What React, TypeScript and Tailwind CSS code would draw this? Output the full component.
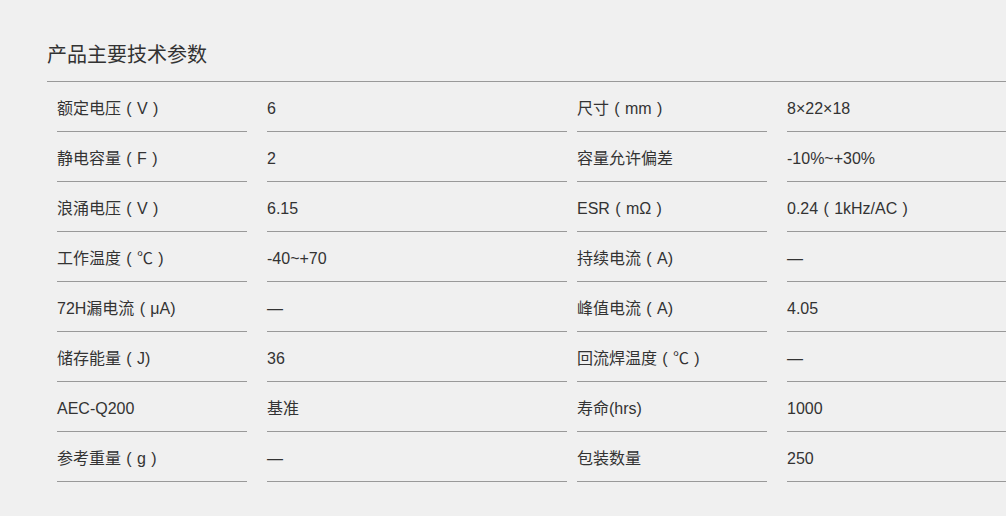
import React from 'react';

interface SpecItem {
  label: string;
  value: string;
}

const specs: SpecItem[] = [
  { label: '额定电压（V）', value: '6' },
  { label: '尺寸（mm）', value: '8×22×18' },
  { label: '静电容量（F）', value: '2' },
  { label: '容量允许偏差', value: '-10%~+30%' },
  { label: '浪涌电压（V）', value: '6.15' },
  { label: 'ESR（mΩ）', value: '0.24（1kHz/AC）' },
  { label: '工作温度（℃）', value: '-40~+70' },
  { label: '持续电流（A)', value: '—' },
  { label: '72H漏电流（μA)', value: '—' },
  { label: '峰值电流（A)', value: '4.05' },
  { label: '储存能量（J)', value: '36' },
  { label: '回流焊温度（℃）', value: '—' },
  { label: 'AEC-Q200', value: '基准' },
  { label: '寿命(hrs)', value: '1000' },
  { label: '参考重量（g）', value: '—' },
  { label: '包装数量', value: '250' },
];

// full-width brackets drawn centred in their em box, the way the original font does it
function SpecText({ text }: { text: string }) {
  const parts = text.split(/([（）])/);
  return (
    <>
      {parts.map((part, i) =>
        part === '（' || part === '）' ? (
          <span key={i} className="inline-block w-[16px] text-center">
            {part === '（' ? '(' : ')'}
          </span>
        ) : (
          <React.Fragment key={i}>{part}</React.Fragment>
        )
      )}
    </>
  );
}

export default function App() {
  return (
    <div
      className="min-h-screen w-full overflow-hidden bg-[#f0f0f0] text-[#333]"
      style={{ fontFamily: '"Liberation Sans", "Noto Sans CJK SC", sans-serif' }}
    >
      <div className="ml-[47px] w-[1100px]">
        <div className="border-b border-[#999] pb-[12px] pt-[41px] text-[20px] leading-[28px]">
          产品主要技术参数
        </div>

        <ul className="grid w-[1040px] grid-cols-2">
          {specs.map((item) => (
            <li key={item.label} className="flex">
              <div className="ml-[10px] h-[50px] w-[190px] border-b border-[#999] pt-[16px] text-[16px] leading-[22px]">
                <SpecText text={item.label} />
              </div>
              <div className="ml-[20px] h-[50px] w-[300px] border-b border-[#999] pt-[16px] text-[16px] leading-[22px]">
                <SpecText text={item.value} />
              </div>
            </li>
          ))}
        </ul>
      </div>
    </div>
  );
}
